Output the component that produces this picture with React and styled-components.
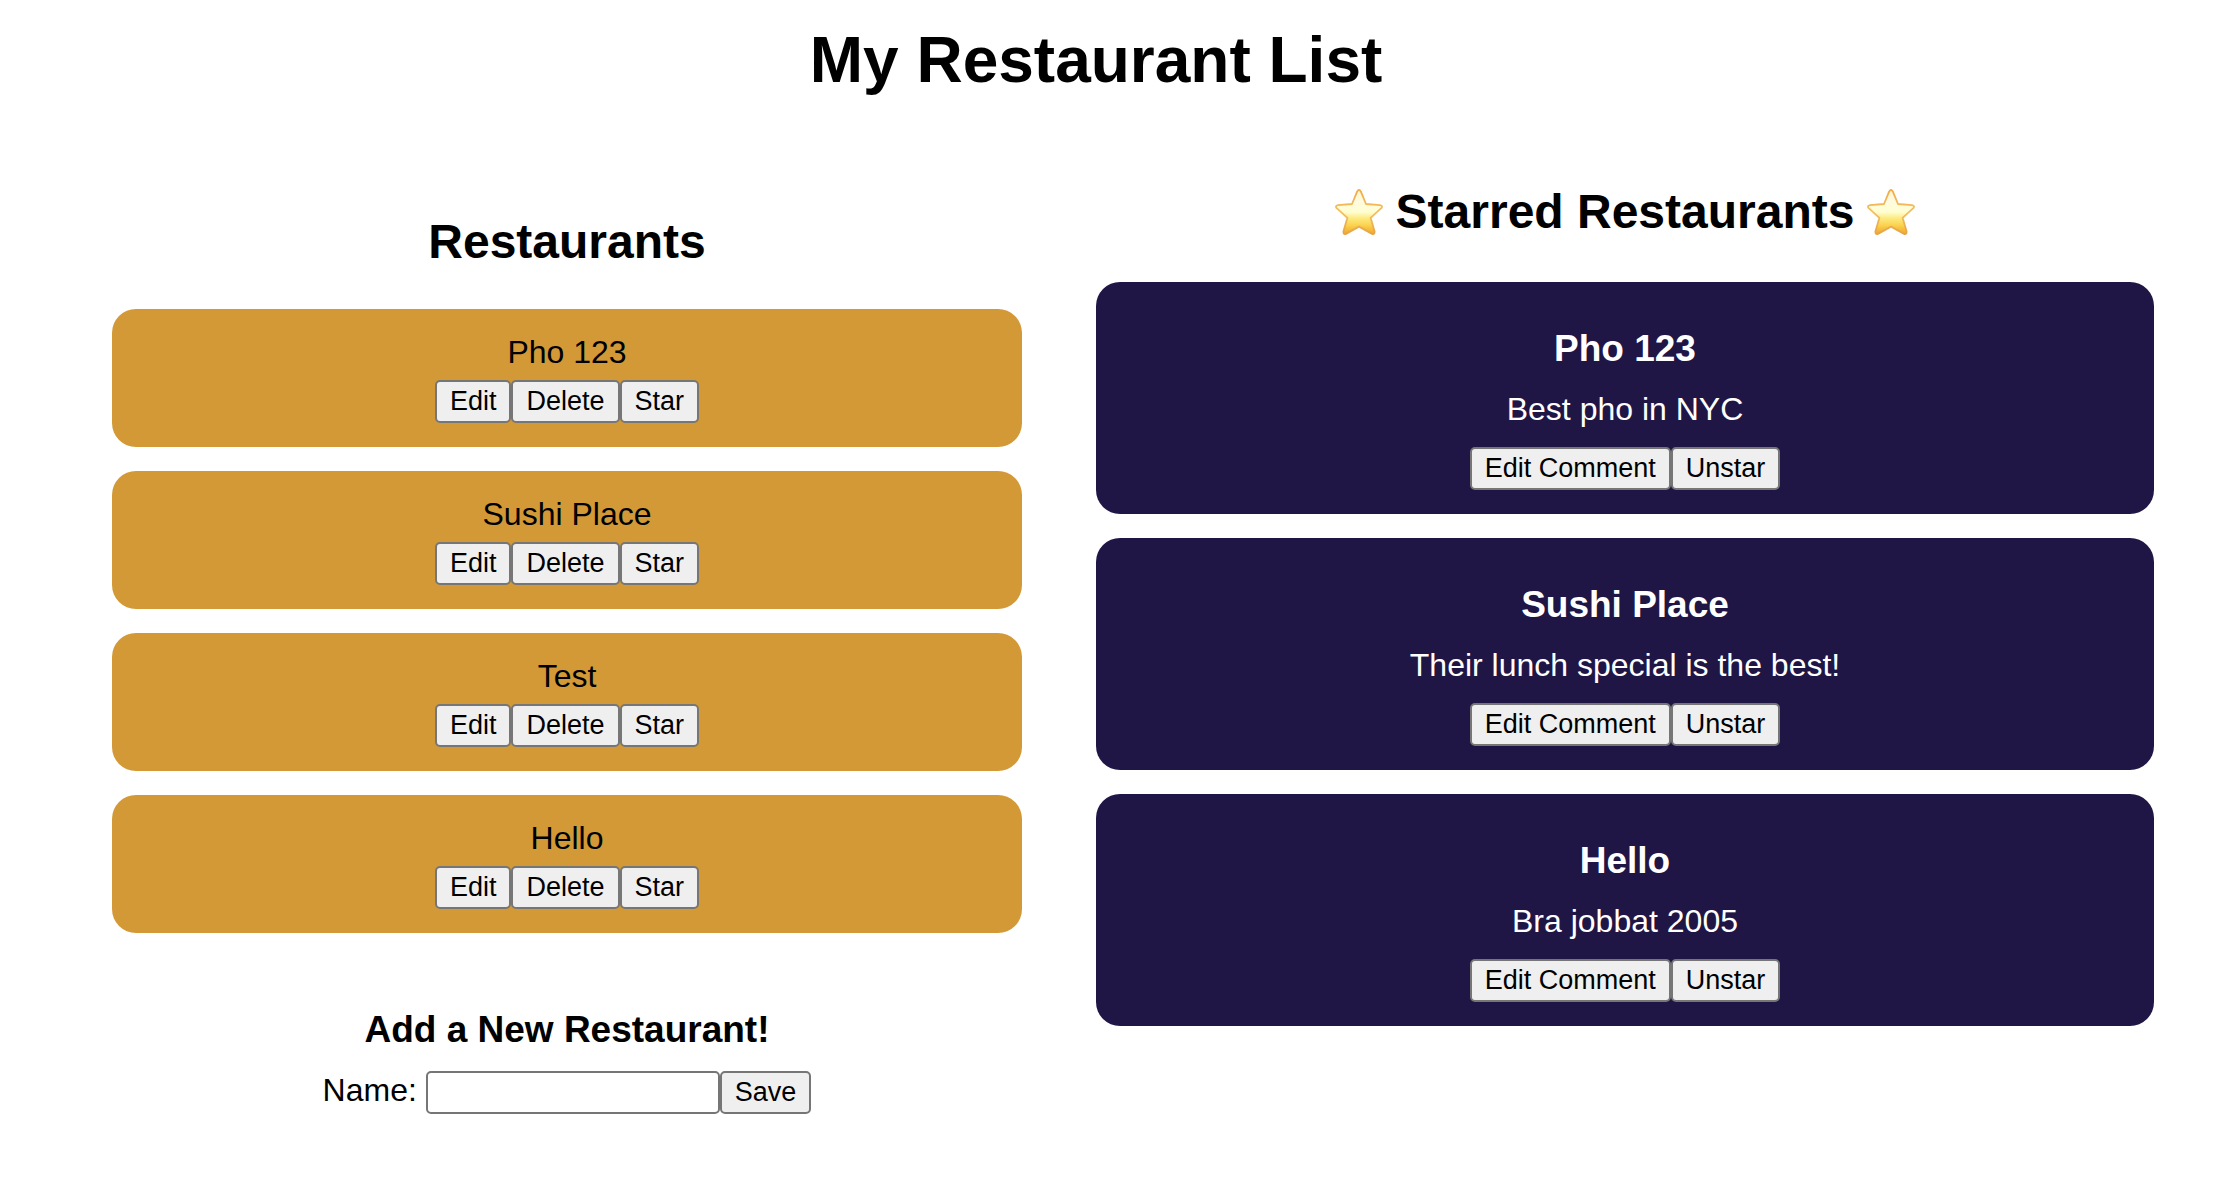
import React from 'react';
import styled, { createGlobalStyle } from 'styled-components';

const GlobalStyle = createGlobalStyle`
  body {
    margin: 0;
    background: #ffffff;
    color: #000000;
    font-family: Helvetica, "Liberation Sans", Arial, sans-serif;
    font-size: 32px;
    line-height: 37px;
  }
`;

const Page = styled.main`
  padding: 23px 72px 24px 112px;
`;

const PageTitle = styled.h1`
  margin: 0 74px 0 0;
  font-size: 64px;
  line-height: 74px;
  text-align: center;
`;

const Columns = styled.div`
  display: grid;
  grid-template-columns: 910fr 1058fr;
  column-gap: 74px;
  align-items: start;
  margin-top: 87px;
  text-align: center;
`;

const Column = styled.section`
  padding-top: ${(p) => (p.$lowered ? '30px' : '0')};
`;

const ColumnTitle = styled.h2`
  display: flex;
  justify-content: center;
  align-items: center;
  gap: 13px;
  margin: 0 0 ${(p) => p.$space};
  font-size: 48px;
  line-height: 55px;
`;

const Cards = styled.ul`
  display: grid;
  gap: 24px;
  margin: 0;
  padding: 0;
  list-style: none;
`;

const Card = styled.li`
  padding: 25px 24px 24px;
  border-radius: 24px;
  background: #d29936;
`;

const StarredCard = styled(Card)`
  padding-top: 45px;
  background: #1f1646;
  color: #ffffff;
`;

const SubTitle = styled.h3`
  margin: 0;
  font-size: 37px;
  line-height: 43px;
`;

const Comment = styled.p`
  margin: 21px 0 19px;
`;

const Buttons = styled.div`
  display: flex;
  justify-content: center;
  margin-top: ${(p) => p.$space || '0'};
`;

const Button = styled.button`
  height: 43px;
  margin: 0;
  padding: 0 13px;
  border: 2px solid #767676;
  border-radius: 5px;
  background: #efefef;
  color: #000000;
  font-family: inherit;
  font-size: 27px;
  line-height: 37px;
`;

const AddSection = styled.section`
  margin-top: 75px;
`;

const AddForm = styled.form`
  display: flex;
  justify-content: center;
  align-items: baseline;
  margin-top: 20px;
`;

const Label = styled.label`
  margin-right: 9px;
`;

const NameInput = styled.input`
  box-sizing: border-box;
  width: 294px;
  height: 43px;
  padding: 2px 4px;
  border: 2px solid #767676;
  border-radius: 5px;
  background: #ffffff;
  font-family: inherit;
  font-size: 27px;
`;

const StarSvg = styled.svg`
  width: 48px;
  height: 46px;
  flex: none;
`;

function StarIcon({ id }) {
  return (
    <StarSvg viewBox="0 0 48 46" aria-hidden="true">
      <defs>
        <linearGradient id={id} x1="0" y1="0" x2="0" y2="1">
          <stop offset="0" stopColor="#fff3cf" />
          <stop offset="0.25" stopColor="#fffbe0" />
          <stop offset="0.5" stopColor="#fffed0" />
          <stop offset="0.64" stopColor="#fdea80" />
          <stop offset="0.8" stopColor="#fbd24e" />
          <stop offset="1" stopColor="#f0a52e" />
        </linearGradient>
        <linearGradient id={`${id}-edge`} x1="0" y1="0" x2="0" y2="1">
          <stop offset="0" stopColor="#f0ac48" />
          <stop offset="0.5" stopColor="#f3bf62" />
          <stop offset="1" stopColor="#e5a545" />
        </linearGradient>
      </defs>
      <path
        d="M22.1 2.6Q24 -0.6 25.9 2.6L31 15L45 16.2Q48.4 16.9 46 19.4L35.6 28.8L39.6 42.4Q39.8 46.2 36.6 44.6L24 37.6L11.4 44.6Q8.2 46.2 8.4 42.4L12.4 28.8L2 19.4Q-0.4 16.9 3 16.2L17 15Z"
        fill={`url(#${id})`}
        stroke={`url(#${id}-edge)`}
        strokeWidth="1.8"
        strokeLinejoin="round"
      />
    </StarSvg>
  );
}

const restaurants = ['Pho 123', 'Sushi Place', 'Test', 'Hello'];

const starred = [
  { name: 'Pho 123', comment: 'Best pho in NYC' },
  { name: 'Sushi Place', comment: 'Their lunch special is the best!' },
  { name: 'Hello', comment: 'Bra jobbat 2005' },
];

export default function App() {
  return (
    <>
      <GlobalStyle />
      <Page>
        <PageTitle>My Restaurant List</PageTitle>
        <Columns>
          <Column $lowered>
            <ColumnTitle $space="40px">Restaurants</ColumnTitle>
            <Cards>
              {restaurants.map((name) => (
                <Card key={name}>
                  <div>{name}</div>
                  <Buttons $space="9px">
                    <Button type="button">Edit</Button>
                    <Button type="button">Delete</Button>
                    <Button type="button">Star</Button>
                  </Buttons>
                </Card>
              ))}
            </Cards>
            <AddSection>
              <SubTitle>Add a New Restaurant!</SubTitle>
              <AddForm onSubmit={(event) => event.preventDefault()}>
                <Label htmlFor="restaurant-name">Name:</Label>
                <NameInput id="restaurant-name" type="text" />
                <Button type="submit">Save</Button>
              </AddForm>
            </AddSection>
          </Column>
          <Column>
            <ColumnTitle $space="43px">
              <StarIcon id="star-left" />
              Starred Restaurants
              <StarIcon id="star-right" />
            </ColumnTitle>
            <Cards>
              {starred.map(({ name, comment }) => (
                <StarredCard key={name}>
                  <SubTitle>{name}</SubTitle>
                  <Comment>{comment}</Comment>
                  <Buttons>
                    <Button type="button">Edit Comment</Button>
                    <Button type="button">Unstar</Button>
                  </Buttons>
                </StarredCard>
              ))}
            </Cards>
          </Column>
        </Columns>
      </Page>
    </>
  );
}
